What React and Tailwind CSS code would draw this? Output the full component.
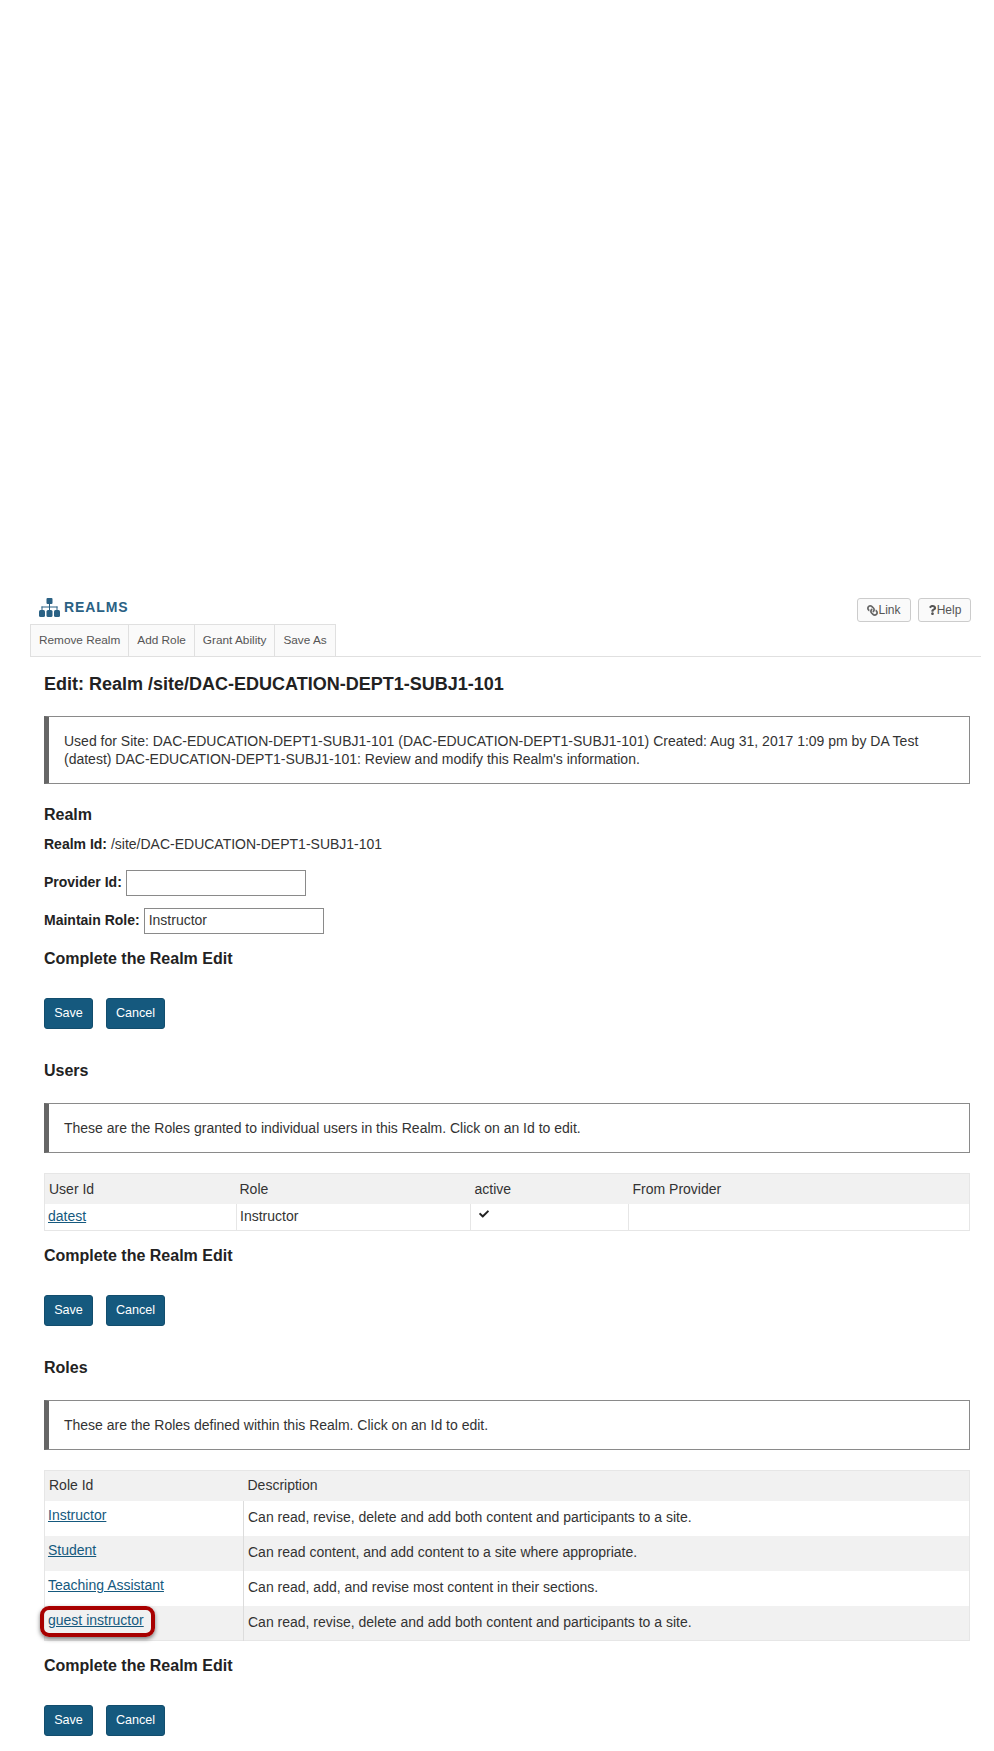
import React from 'react';
import { FaCheck, FaLink, FaQuestion } from 'react-icons/fa';

const Heading = ({ children, className = '' }) => (
    <h3 className={`text-base font-bold leading-5 text-[#222] ${className}`}>{children}</h3>
);

const Instruction = ({ children, className = '' }) => (
    <div className={`border border-[#8a8a8a] border-l-[5px] border-l-[#666] px-[15px] py-[15px] text-sm leading-[18px] text-[#333] ${className}`}>
        {children}
    </div>
);

const Actions = () => (
    <div className="flex gap-[13px] mt-[29px]">
        <button className="w-[49px] h-[31px] bg-[#15597e] border border-[#124d6d] rounded-[3px] text-white text-[12.6px]">Save</button>
        <button className="w-[59px] h-[31px] bg-[#15597e] border border-[#124d6d] rounded-[3px] text-white text-[12.6px]">Cancel</button>
    </div>
);

const CompleteEdit = ({ className = '' }) => (
    <div className={className}>
        <Heading>Complete the Realm Edit</Heading>
        <Actions />
    </div>
);

const MenuItem = ({ children }) => (
    <li className="px-2 h-full flex items-center border-r border-[#e0e0e0] text-[11.8px] text-[#555]">{children}</li>
);

const TopButton = ({ icon, label, width }) => (
    <button className={`${width} h-6 flex items-center justify-center bg-[#fafafa] border border-[#ccc] rounded-[3px] text-xs text-[#555]`}>
        {icon}
        {label}
    </button>
);

const FieldRow = ({ label, value, className = '' }) => (
    <div className={`flex items-center gap-1 ${className}`}>
        <label className="font-bold text-sm text-[#222] pb-[2px]">{label}</label>
        <input
            type="text"
            readOnly
            value={value}
            className="w-[180px] h-[26px] border border-[#8a8a8a] px-1 pb-[2px] text-sm text-[#333] outline-none"
        />
    </div>
);

const LinkCell = ({ children }) => (
    <a href="#" className="text-sm text-[#15597e] underline">{children}</a>
);

// rounded boxes like the old font awesome sitemap
const SitemapIcon = () => (
    <svg viewBox="0 0 21 19" className="w-[21px] h-[19px] fill-[#2a6184]">
        <rect x="7.5" y="0" width="6" height="6" rx="1" />
        <rect x="10" y="6" width="1" height="3" />
        <rect x="2.5" y="8.5" width="16" height="1" />
        <rect x="2.5" y="8.5" width="1" height="4" />
        <rect x="17.5" y="8.5" width="1" height="4" />
        <rect x="10" y="9" width="1" height="3" />
        <rect x="0" y="12" width="6" height="7" rx="1.5" />
        <rect x="7.5" y="12" width="6" height="7" rx="1.5" />
        <rect x="15" y="12" width="6" height="7" rx="1.5" />
    </svg>
);

const roles = [
    { id: 'Instructor', desc: 'Can read, revise, delete and add both content and participants to a site.' },
    { id: 'Student', desc: 'Can read content, and add content to a site where appropriate.' },
    { id: 'Teaching Assistant', desc: 'Can read, add, and revise most content in their sections.' },
    { id: 'guest instructor', desc: 'Can read, revise, delete and add both content and participants to a site.', mark: true },
];

export default function App() {
    return (
        <div className="w-[994px] h-[1751px] bg-white overflow-hidden pt-[596px] pl-[30px] pr-[13px] font-['Liberation_Sans',Arial,sans-serif]">
            {/* tool title */}
            <div className="h-7 flex justify-between items-start">
                <div className="flex items-center gap-1 h-[22px] pl-[9px] text-[#2a6184] font-bold text-sm tracking-[0.9px]">
                    <SitemapIcon />
                    REALMS
                </div>
                <div className="flex gap-[7px] pr-[10px] mt-[2px]">
                    <TopButton width="w-[54px]" label="Link" icon={<FaLink className="w-[11px] h-[11px] text-[#666] -scale-x-100" />} />
                    <TopButton width="w-[53px]" label="Help" icon={<FaQuestion className="w-[9px] h-[10px] text-[#555]" />} />
                </div>
            </div>

            {/* toolbar */}
            <ul className="h-[33px] flex border-b border-[#e0e0e0]">
                <div className="flex h-full border border-[#e0e0e0] border-b-0 bg-[#fafafa]">
                    <MenuItem>Remove Realm</MenuItem>
                    <MenuItem>Add Role</MenuItem>
                    <MenuItem>Grant Ability</MenuItem>
                    <li className="px-2 h-full flex items-center text-[11.8px] text-[#555]">Save As</li>
                </div>
            </ul>

            <div className="pl-[14px] pr-[11px]">
                <h2 className="mt-[16px] text-lg font-bold leading-[22px] text-[#222]">Edit: Realm /site/DAC-EDUCATION-DEPT1-SUBJ1-101</h2>

                <Instruction className="mt-[21px] h-[68px]">
                    Used for Site: DAC-EDUCATION-DEPT1-SUBJ1-101 (DAC-EDUCATION-DEPT1-SUBJ1-101) Created: Aug 31, 2017 1:09 pm by DA Test (datest) DAC-EDUCATION-DEPT1-SUBJ1-101: Review and modify this Realm's information.
                </Instruction>

                <Heading className="mt-[21px]">Realm</Heading>
                <p className="mt-[9px] text-sm leading-5 text-[#333]">
                    <span className="font-bold text-[#222]">Realm Id:</span> /site/DAC-EDUCATION-DEPT1-SUBJ1-101
                </p>
                <FieldRow label="Provider Id:" value="" className="mt-[16px]" />
                <FieldRow label="Maintain Role:" value="Instructor" className="mt-[12px]" />

                <CompleteEdit className="mt-[15px]" />

                <Heading className="mt-[32px]">Users</Heading>
                <Instruction className="mt-[22px] h-[50px]">
                    These are the Roles granted to individual users in this Realm. Click on an Id to edit.
                </Instruction>

                <table className="mt-5 w-full table-fixed border border-[#e6e6e6] text-sm text-[#333]">
                    <colgroup>
                        <col className="w-[192px]" />
                        <col className="w-[234px]" />
                        <col className="w-[158px]" />
                        <col />
                    </colgroup>
                    <thead>
                        <tr className="h-[30px] bg-[#f1f1f1] text-left">
                            <th className="font-normal px-1">User Id</th>
                            <th className="font-normal pl-[3px] pr-1">Role</th>
                            <th className="font-normal px-1">active</th>
                            <th className="font-normal px-1">From Provider</th>
                        </tr>
                    </thead>
                    <tbody>
                        <tr className="h-[27px]">
                            <td className="pl-[3px] pr-1 pb-[2px] border-r border-[#e6e6e6]"><LinkCell>datest</LinkCell></td>
                            <td className="pl-[3px] pr-1 pb-[2px] border-r border-[#e6e6e6]">Instructor</td>
                            <td className="px-1 border-r border-[#e6e6e6] align-top pt-[5px]"><FaCheck className="ml-[4px] w-[10px] h-[10px] text-[#222]" /></td>
                            <td className="px-1"></td>
                        </tr>
                    </tbody>
                </table>

                <CompleteEdit className="mt-[15px]" />

                <Heading className="mt-[32px]">Roles</Heading>
                <Instruction className="mt-[22px] h-[50px]">
                    These are the Roles defined within this Realm. Click on an Id to edit.
                </Instruction>

                <table className="mt-5 w-full table-fixed border border-[#e6e6e6] text-sm text-[#333]">
                    <colgroup>
                        <col className="w-[199px]" />
                        <col />
                    </colgroup>
                    <thead>
                        <tr className="h-[30px] bg-[#f1f1f1] text-left">
                            <th className="font-normal px-1 pb-[1px]">Role Id</th>
                            <th className="font-normal px-1 pb-[1px]">Description</th>
                        </tr>
                    </thead>
                    <tbody>
                        {roles.map((role, i) => (
                            <tr key={role.id} className={`h-[35px] ${i % 2 === 1 ? 'bg-[#f1f1f1]' : ''}`}>
                                <td className="pl-[3px] pr-1 pt-[4px] align-top border-r border-[#dcdcdc] relative">
                                    <LinkCell>{role.id}</LinkCell>
                                    {role.mark && (
                                        <div className="absolute left-[-5px] top-0 w-[115px] h-[31px] border-[4px] border-[#a80000] rounded-[9px] shadow-[0_2px_4px_rgba(0,0,0,0.5)]"></div>
                                    )}
                                </td>
                                <td className="px-1 pb-[2px]">{role.desc}</td>
                            </tr>
                        ))}
                    </tbody>
                </table>

                <CompleteEdit className="mt-[15px]" />
            </div>
        </div>
    );
}
